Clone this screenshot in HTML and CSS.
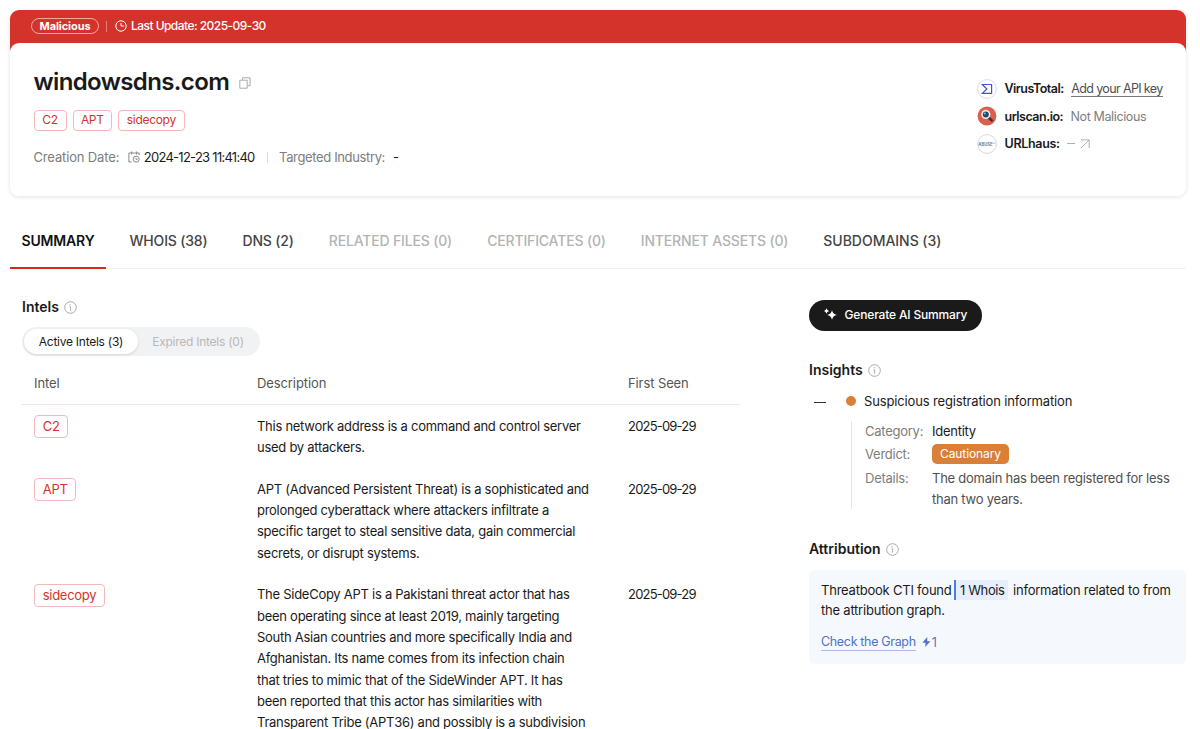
FILE: index.html
```html
<!DOCTYPE html>
<html lang="en">

<head>
    <meta charset="UTF-8">
    <meta name="viewport" content="width=device-width, initial-scale=1.0">
    <title>windowsdns.com</title>
    <link rel="stylesheet" href="styles.css">
</head>

<body>
    <div class="banner">
        <div class="banner-top">
            <span class="status">Malicious</span>
            <span class="banner-line"></span>
            <svg class="clock" width="12" height="12" viewBox="0 0 12 12" fill="none" stroke="#fff">
                <circle cx="6" cy="6" r="5.2" />
                <path d="M6 3v3h2.8" />
            </svg>
            <span class="update">Last Update: 2025-09-30</span>
        </div>
        <div class="card">
            <div class="card-main">
                <div class="title-row">
                    <h1>windowsdns.com</h1>
                    <svg class="copy" width="12" height="12" viewBox="0 0 12 12" fill="none" stroke="#aaa">
                        <path d="M3.5 2.7V.8h7.6v8H9M.8 3.2h7.4v8H.8z" />
                    </svg>
                </div>
                <div class="tags">
                    <span class="tag">C2</span>
                    <span class="tag">APT</span>
                    <span class="tag">sidecopy</span>
                </div>
                <div class="meta">
                    <span class="meta-label created">Creation Date:</span>
                    <svg class="calendar" width="12" height="12" viewBox="0 0 12 12" fill="none" stroke="#888">
                        <path d="M3.6 11H.9V2h10.3v2M3.6.5v3M8.6.5v3" />
                        <circle cx="8.2" cy="8.2" r="3" />
                        <path d="M8 6.8v1.6h1.5" />
                    </svg>
                    <span class="meta-date">2024-12-23 11:41:40</span>
                    <span class="meta-line"></span>
                    <span class="meta-label industry">Targeted Industry:</span>
                    <span class="meta-dash">-</span>
                </div>
            </div>
            <div class="sources">
                <div class="source">
                    <svg width="20" height="20" viewBox="0 0 20 20" fill="none">
                        <circle cx="10" cy="10" r="9.4" fill="#fff" stroke="#d9dbe6" />
                        <path d="M5.3 5.5h9.3v8.9H5.3L9.9 10z" stroke="#4a50dc" stroke-width="1.2" />
                    </svg>
                    <b>VirusTotal:</b>
                    <a class="api-key" href="#">Add your API key</a>
                </div>
                <div class="source">
                    <svg width="20" height="20" viewBox="0 0 20 20">
                        <circle cx="10" cy="10" r="9.4" fill="#d9604c" />
                        <path d="M11.5 11.5l4 3.7" stroke="#3a3032" stroke-width="2.4" />
                        <circle cx="8.8" cy="8.4" r="4.6" fill="#f4ece8" />
                        <circle cx="8.8" cy="8.4" r="3" fill="#1f4a70" />
                        <circle cx="7.8" cy="7.4" r="1" fill="#8fb6d4" />
                    </svg>
                    <b>urlscan.io:</b>
                    <span class="source-text">Not Malicious</span>
                </div>
                <div class="source">
                    <svg width="20" height="20" viewBox="0 0 20 20">
                        <circle cx="10" cy="10" r="9.4" fill="#fff" stroke="#d5d9dd" />
                        <text class="abuse" x="1.3" y="11.6">ABUSE</text>
                        <path d="M15.3 9.2h3" stroke="#9fb4c4" stroke-width=".8" />
                    </svg>
                    <b class="urlhaus">URLhaus:</b>
                    <span class="source-none"></span>
                    <svg width="10" height="10" viewBox="0 0 10 10" fill="none" stroke="#b0b0b0">
                        <path d="M1 .9h8.2V9M9 1L.8 9.2" />
                    </svg>
                </div>
            </div>
        </div>
    </div>

    <div class="tabs">
        <div class="tab active">SUMMARY</div>
        <div class="tab">WHOIS (38)</div>
        <div class="tab">DNS (2)</div>
        <div class="tab disabled">RELATED FILES (0)</div>
        <div class="tab disabled">CERTIFICATES (0)</div>
        <div class="tab disabled">INTERNET ASSETS (0)</div>
        <div class="tab subdomains">SUBDOMAINS (3)</div>
    </div>

    <div class="content">
        <div class="intels">
            <h2>Intels
                <svg class="info" width="13" height="13" viewBox="0 0 13 13" fill="none" stroke="#aaa">
                    <circle cx="6.5" cy="6.5" r="5.8" />
                    <path d="M5.6 5.7h1v4M6 3.2v1.2" />
                </svg>
            </h2>
            <div class="switch">
                <span class="switch-on">Active Intels (3)</span>
                <span class="switch-off">Expired Intels (0)</span>
            </div>
            <div class="row head">
                <div>Intel</div>
                <div>Description</div>
                <div>First Seen</div>
            </div>
            <div class="row">
                <div><span class="tag">C2</span></div>
                <div class="desc">This network address is a command and control server<br>used by attackers.</div>
                <div class="seen">2025-09-29</div>
            </div>
            <div class="row">
                <div><span class="tag">APT</span></div>
                <div class="desc">APT (Advanced Persistent Threat) is a sophisticated and<br>prolonged cyberattack where attackers infiltrate a<br>specific target to steal sensitive data, gain commercial<br>secrets, or disrupt systems.</div>
                <div class="seen">2025-09-29</div>
            </div>
            <div class="row">
                <div><span class="tag">sidecopy</span></div>
                <div class="desc">The SideCopy APT is a Pakistani threat actor that has<br>been operating since at least 2019, mainly targeting<br>South Asian countries and more specifically India and<br>Afghanistan. Its name comes from its infection chain<br>that tries to mimic that of the SideWinder APT. It has<br>been reported that this actor has similarities with<br>Transparent Tribe (APT36) and possibly is a subdivision</div>
                <div class="seen">2025-09-29</div>
            </div>
        </div>

        <div class="side">
            <button class="generate">
                <svg width="13" height="13" viewBox="0 0 13 13" fill="#fff">
                    <path d="M8 2.3Q8.8 6.2 12.8 7 8.8 7.8 8 11.7 7.2 7.8 3.2 7 7.2 6.200 8 2.3z" />
                    <path d="M2.500.3Q3 2.500 5.100 3 3 3.500 2.500 5.700 2 3.500 0 3 2 2.500 2.500.3z" />
                </svg>
                <span>Generate AI Summary</span>
            </button>

            <h2 class="insights-title">Insights
                <svg class="info" width="13" height="13" viewBox="0 0 13 13" fill="none" stroke="#aaa">
                    <circle cx="6.5" cy="6.5" r="5.8" />
                    <path d="M5.6 5.7h1v4M6 3.2v1.2" />
                </svg>
            </h2>
            <div class="insight">
                <span class="minus"></span>
                <span class="dot"></span>
                <span>Suspicious registration information</span>
            </div>
            <div class="details">
                <div class="label">Category:</div>
                <div class="identity">Identity</div>
                <div class="label">Verdict:</div>
                <div class="verdict"><span class="caution">Cautionary</span></div>
                <div class="label">Details:</div>
                <div class="detail-text">The domain has been registered for less<br>than two years.</div>
            </div>

            <h2 class="attribution-title">Attribution
                <svg class="info" width="13" height="13" viewBox="0 0 13 13" fill="none" stroke="#aaa">
                    <circle cx="6.5" cy="6.5" r="5.8" />
                    <path d="M5.6 5.7h1v4M6 3.2v1.2" />
                </svg>
            </h2>
            <div class="attribution">
                <div class="found"><span>Threatbook CTI found</span><span class="whois-count">1 Whois</span><span>information related to from</span></div>
                <div class="graph-text">the attribution graph.</div>
                <div class="graph-link">
                    <a href="#">Check the Graph</a>
                    <svg width="9" height="10" viewBox="0 0 9 10" fill="#4f73c4">
                        <path d="M5.3 0L.4 5.8h3.2L3.2 10 8.4 4.2H5.2z" />
                    </svg>
                    <span>1</span>
                </div>
            </div>
        </div>
    </div>
</body>

</html>
```
FILE: styles.css
```css
* {
    box-sizing: border-box;
}

body {
    margin: 0;
    padding: 10px 14px 0 10px;
    height: 729px;
    overflow: hidden;
    background-color: #ffffff;
    color: #1a1a1a;
    font-family: Inter, "Liberation Sans", sans-serif;
    font-size: 13px;
}

svg {
    display: block;
    flex: none;
}

.banner {
    height: 186px;
    background: linear-gradient(#d3332b 45px, #ffffff 45px);
    border-radius: 9px;
    box-shadow: 0 1px 4px rgba(0, 0, 0, 0.12);
}

.banner-top {
    display: flex;
    align-items: center;
    height: 33px;
    padding: 0 0 1px 21px;
    color: #ffffff;
    white-space: nowrap;
}

.status {
    width: 68px;
    height: 16px;
    border: 1px solid #f0aaa6;
    border-radius: 8px;
    font-size: 11px;
    font-weight: 700;
    letter-spacing: -0.1px;
    line-height: 14px;
    text-align: center;
}

.banner-line {
    width: 1px;
    height: 11px;
    margin: 0 8px 0 7px;
    background-color: #e8807a;
}

.update {
    margin: -1px 0 0 4px;
    font-size: 12px;
    font-weight: 500;
    letter-spacing: -0.54px;
}

.card {
    display: flex;
    justify-content: space-between;
    height: 153px;
    padding: 0 23.5px;
    background-color: #ffffff;
    border-radius: 9px;
}

.title-row {
    display: flex;
    align-items: center;
    height: 30px;
    margin-top: 23px;
}

h1 {
    margin: 0;
    font-size: 24px;
    font-weight: 600;
    letter-spacing: -0.62px;
}

.copy {
    margin: 3px 0 0 10px;
}

.tags {
    display: flex;
    gap: 6px;
    margin-top: 14px;
}

.tag {
    display: inline-block;
    height: 21px;
    padding: 0 7.8px;
    border: 1px solid #f3b9b6;
    border-radius: 4px;
    color: #d3332b;
    font-size: 12px;
    letter-spacing: -0.3px;
    line-height: 18px;
}

.tags .tag:nth-child(2) {
    padding: 0 7.3px;
}

.meta {
    display: flex;
    align-items: center;
    height: 20px;
    margin-top: 16px;
    white-space: nowrap;
}

.meta-label {
    color: #7d7d7d;
    letter-spacing: -0.15px;
}

.meta-label.industry {
    letter-spacing: -0.36px;
}

.meta-date {
    letter-spacing: -0.73px;
}

.calendar {
    margin: 0 4px 0 8.5px;
}

.meta-line {
    width: 1px;
    height: 11px;
    margin: 0 11.5px 0 12px;
    background-color: #dddddd;
}

.meta-dash {
    margin-left: 8px;
}

.sources {
    width: 186px;
    padding-top: 32px;
}

.source {
    display: flex;
    align-items: center;
    height: 27.5px;
    white-space: nowrap;
}

.source b {
    margin: 0 7.5px 0 8px;
    font-size: 12.5px;
    font-weight: 600;
    letter-spacing: -0.5px;
}

.source b.urlhaus {
    letter-spacing: -0.32px;
}

.api-key {
    border-bottom: 1px solid #777777;
    color: #505050;
    font-size: 12.5px;
    letter-spacing: -0.63px;
    line-height: 15px;
    text-decoration: none;
}

.source-text {
    color: #7d7d7d;
    font-size: 12.5px;
    letter-spacing: -0.38px;
}

.source-none {
    width: 8px;
    height: 1px;
    margin-right: 5px;
    background-color: #b0b0b0;
}

.abuse {
    fill: #5d86a6;
    font-size: 4.2px;
    font-weight: 700;
}

.tabs {
    display: flex;
    gap: 12px;
    height: 55px;
    margin-top: 18px;
    border-bottom: 1px solid #f0f0f0;
    white-space: nowrap;
}

.tab {
    height: 55px;
    padding: 0 11.5px;
    color: #444444;
    font-size: 14px;
    font-weight: 500;
    letter-spacing: -0.17px;
    line-height: 54px;
}

.tab.active {
    border-bottom: 2px solid #d8281c;
    color: #111111;
    font-weight: 600;
}

.tab.disabled {
    color: #b3b3b3;
    letter-spacing: -0.16px;
}

.tab.subdomains {
    letter-spacing: -0.03px;
}

.content {
    display: flex;
    justify-content: space-between;
}

.intels {
    width: 718px;
    margin-left: 12px;
    padding-top: 27px;
}

h2 {
    display: flex;
    align-items: center;
    gap: 5px;
    height: 20px;
    margin: 0;
    font-size: 14px;
    font-weight: 600;
}

.info {
    margin-top: 2px;
}

.switch {
    display: flex;
    width: 238px;
    height: 29px;
    margin-top: 11px;
    padding: 2px;
    background-color: #f1f2f4;
    border-radius: 15px;
    font-size: 12px;
    letter-spacing: -0.25px;
    line-height: 25px;
    text-align: center;
    white-space: nowrap;
}

.switch-on {
    width: 114px;
    background-color: #ffffff;
    border-radius: 13px;
    box-shadow: 0 1px 3px rgba(0, 0, 0, 0.12);
}

.switch-off {
    flex: 1;
    color: #b8b8b8;
}

.row {
    display: grid;
    grid-template-columns: 223px 371px 1fr;
    padding: 10.8px 0 9.6px 12px;
    line-height: 21.3px;
    white-space: nowrap;
}

.row.head {
    height: 49px;
    padding-top: 17px;
    border-bottom: 1px solid #e8e8e8;
    color: #555555;
    letter-spacing: -0.1px;
}

.desc {
    letter-spacing: -0.27px;
}

.seen {
    letter-spacing: -0.8px;
}

.row .tag {
    height: 23px;
    margin-top: -0.7px;
    font-size: 13px;
    line-height: 21px;
    vertical-align: top;
}

.side {
    width: 377px;
    padding-top: 31px;
}

.generate {
    display: flex;
    align-items: center;
    gap: 7.5px;
    width: 173px;
    height: 31px;
    padding: 0 0 2px 15px;
    background-color: #1a1a1a;
    border: none;
    border-radius: 16px;
    color: #ffffff;
    font-family: inherit;
    font-size: 12px;
    font-weight: 500;
    letter-spacing: -0.16px;
    white-space: nowrap;
}

.insights-title {
    margin-top: 28.5px;
}

.insight {
    display: flex;
    align-items: center;
    height: 20px;
    margin-top: 11.5px;
    padding-left: 5px;
    letter-spacing: -0.15px;
}

.minus {
    width: 12px;
    height: 1px;
    margin-top: 2px;
    background-color: #333333;
}

.dot {
    width: 10px;
    height: 10px;
    margin: 0 8px 0 20px;
    background-color: #da7f37;
    border-radius: 50%;
}

.details {
    display: grid;
    grid-template-columns: 67px 1fr;
    grid-template-rows: 21px 25px 42px;
    margin: 10px 0 0 42px;
    padding-left: 13px;
    border-left: 1px solid #e6e6e6;
    letter-spacing: -0.25px;
    line-height: 21px;
    white-space: nowrap;
}

.label {
    color: #7d7d7d;
}

.label:nth-child(3) {
    padding-top: 2px;
}

.label:nth-child(5),
.detail-text {
    padding-top: 1px;
}

.detail-text {
    color: #505050;
}

.caution {
    display: block;
    width: 77px;
    height: 20px;
    margin-top: 2px;
    background-color: #da7f37;
    border-radius: 5px;
    color: #ffffff;
    font-size: 12px;
    letter-spacing: -0.1px;
    line-height: 19px;
    text-align: center;
}

.attribution-title {
    margin-top: 29.5px;
}

.attribution {
    height: 94px;
    margin-top: 11.5px;
    padding: 10px 12px;
    background-color: #f5f9fe;
    border-radius: 5px;
    letter-spacing: -0.22px;
    white-space: nowrap;
}

.found {
    display: flex;
    align-items: center;
    height: 20px;
    line-height: 20px;
}

.whois-count {
    width: 54px;
    margin: 0 5px 0 2.5px;
    padding-left: 4px;
    background-color: #e6edfc;
    border-left: 2px solid #4b7fe8;
    letter-spacing: -0.4px;
}

.graph-text {
    line-height: 20px;
}

.graph-link {
    display: flex;
    align-items: center;
    height: 20px;
    margin-top: 12px;
    color: #4f73c4;
    font-size: 12.5px;
}

.graph-link a {
    border-bottom: 1px solid #a9bce6;
    color: #4f73c4;
    letter-spacing: -0.33px;
    line-height: 16px;
    text-decoration: none;
}

.graph-link svg {
    margin: 0 1px 0 6px;
}
```
